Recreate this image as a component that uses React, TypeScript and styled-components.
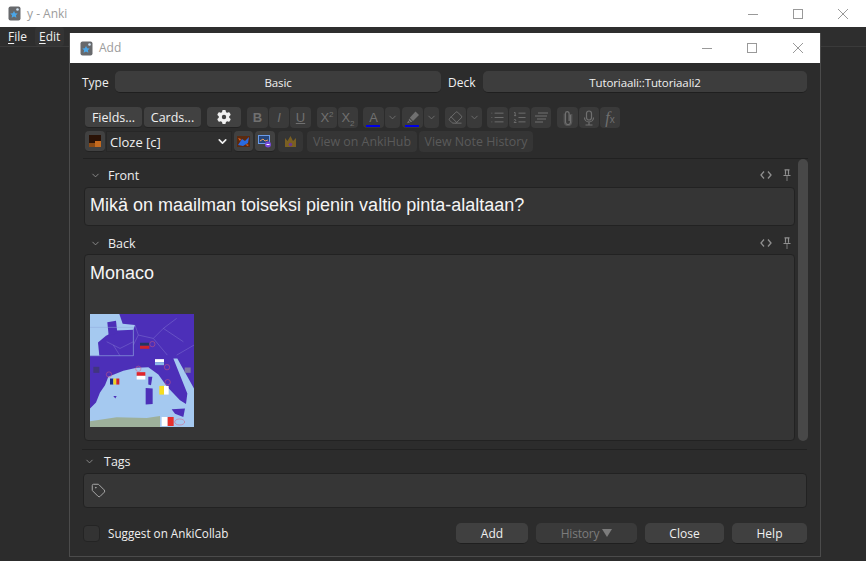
import React from 'react';
import styled, { createGlobalStyle } from 'styled-components';
import { ChevronDown, Tag, Eraser, List, ListOrdered } from 'lucide-react';
import { FaGear } from 'react-icons/fa6';

const Global = createGlobalStyle`
  html, body { margin: 0; padding: 0; background: #2c2c2c; }
  * { box-sizing: border-box; }
`;

const UI = `"Open Sans", "Noto Sans", sans-serif`;

const Screen = styled.div`
  position: relative;
  width: 866px;
  height: 561px;
  overflow: hidden;
  background: #2c2c2c;
  font-family: ${UI};
  font-size: 12px;
  color: #f0f0f0;
`;
const TitleBar = styled.div<{ $h: number; $pr: number }>`
  height: ${p => p.$h}px;
  padding-right: ${p => p.$pr}px;
  background: #fff;
  display: flex;
  align-items: center;
`;
const AppIcon = styled.svg<{ $ml: number }>`
  margin-left: ${p => p.$ml}px;
  width: 13px;
  height: 15px;
  flex: none;
`;
const TitleText = styled.span`
  margin-left: 6px;
  margin-top: -1px;
  flex: 1;
  color: #9c9c9c;
  font-size: 12px;
`;
const WinBtn = styled.div<{ $mr?: number }>`
  width: 45px;
  height: 100%;
  margin-right: ${p => p.$mr ?? 0}px;
  display: flex;
  align-items: center;
  justify-content: center;
`;
const MenuBar = styled.div`
  height: 20px;
  background: #2e2e2e;
  border-bottom: 1px solid #3a3a3a;
  display: flex;
  align-items: center;
  padding-left: 4px;
  gap: 4px;
`;
const MenuItem = styled.span<{ $hover?: boolean }>`
  padding: 0 4px;
  height: 19px;
  line-height: 19px;
  border-radius: 3px;
  background: ${p => (p.$hover ? '#343434' : 'transparent')};
  font-size: 12px;
  u { text-underline-offset: 2px; }
`;
const Dialog = styled.div`
  position: absolute;
  left: 69px;
  top: 33px;
  width: 752px;
  height: 524px;
  background: #2c2c2c;
  border: 1px solid #4b4b4b;
  border-top: 0;
  display: flex;
  flex-direction: column;
`;
const Body = styled.div`
  flex: 1;
  display: flex;
  flex-direction: column;
  padding: 8px 13px 0 12px;
`;
const TypeRow = styled.div`
  display: flex;
  align-items: center;
  height: 22px;
`;
const RowLabel = styled.span<{ $w: number }>`
  width: ${p => p.$w}px;
  flex: none;
  font-size: 12px;
`;
const Combo = styled.div<{ $w: number; $mr?: number }>`
  width: ${p => p.$w}px;
  margin-right: ${p => p.$mr ?? 0}px;
  height: 22px;
  flex: none;
  background: #3d3d3d;
  border-radius: 5px;
  border-bottom: 1px solid #1f1f1f;
  display: flex;
  align-items: center;
  justify-content: center;
  padding-top: 2px;
  font-size: 11.5px;
  letter-spacing: -0.1px;
`;
const ToolRow = styled.div<{ $mt: number }>`
  display: flex;
  align-items: center;
  height: 21px;
  margin-top: ${p => p.$mt}px;
  padding-left: 3px;
`;
const ToolBtn = styled.div<{ $w: number; $ml?: number; $off?: boolean; $size?: number; $faint?: boolean }>`
  width: ${p => p.$w}px;
  margin-left: ${p => p.$ml ?? 0}px;
  height: 21px;
  flex: none;
  position: relative;
  background: ${p => (p.$faint ? '#353535' : p.$off ? '#3a3a3a' : '#414141')};
  border-radius: 4px;
  border-bottom: ${p => (p.$off ? '0' : '1px solid #222')};
  color: ${p => (p.$faint ? '#5a5a5a' : p.$off ? '#707070' : '#f0f0f0')};
  font-size: ${p => p.$size ?? 12.5}px;
  display: flex;
  align-items: center;
  justify-content: center;
  white-space: nowrap;
  svg { flex: none; }
`;
const Letter = styled.span<{ $bold?: boolean; $italic?: boolean; $under?: boolean }>`
  font-family: "Liberation Sans", sans-serif;
  font-size: 13px;
  font-weight: ${p => (p.$bold ? 700 : 400)};
  font-style: ${p => (p.$italic ? 'italic' : 'normal')};
  text-decoration: ${p => (p.$under ? 'underline' : 'none')};
  sup, sub { font-size: 8px; line-height: 0; }
`;
const FxMark = styled.span`
  font-family: "Liberation Serif", serif;
  font-style: italic;
  font-size: 16px;
  small { font-family: "Liberation Sans", sans-serif; font-style: normal; font-size: 10px; }
`;
const ColorBar = styled.i`
  position: absolute;
  left: 3px;
  right: 4px;
  bottom: 1px;
  height: 2px;
  background: #0000e6;
`;
const NoteSelect = styled.div`
  width: 126px;
  height: 21px;
  flex: none;
  margin-left: 1px;
  background: #2f2f2f;
  border: 1px solid #272727;
  display: flex;
  align-items: center;
  justify-content: space-between;
  padding: 0 2px 0 3px;
  font-size: 13px;
`;
const Sep = styled.div`
  height: 1px;
  background: #212121;
`;
const Fields = styled.div`
  display: flex;
  margin-top: 6px;
  margin-right: -1px;
  border-top: 1px solid #212121;
  margin-left: 1px;
  height: 283px;
`;
const FieldCol = styled.div`
  width: 711px;
  flex: none;
  margin-left: 1px;
  display: flex;
  flex-direction: column;
`;
const Scrollbar = styled.div`
  width: 10px;
  flex: none;
  margin-left: 3px;
  background: #484848;
  border-radius: 5px;
`;
const FieldHead = styled.div<{ $pt: number }>`
  height: 28px;
  padding-top: ${p => p.$pt}px;
  display: flex;
  align-items: center;
  color: #eee;
  font-size: 12.5px;
  padding-left: 6px;
`;
const HeadName = styled.span<{ $ml: number }>`
  margin-left: ${p => p.$ml}px;
  flex: 1;
`;
const HeadIcons = styled.div`
  display: flex;
  align-items: center;
  margin-right: 4px;
  gap: 11px;
`;
const Editor = styled.div<{ $h: number; $pt: number }>`
  height: ${p => p.$h}px;
  background: #353535;
  border: 1px solid #222;
  border-radius: 4px;
  padding: ${p => p.$pt}px 5px 0;
  font-family: "Liberation Sans", Arial, sans-serif;
  font-size: 18px;
  line-height: 24px;
  color: #f5f5f5;
`;
const MapFigure = styled.svg`
  display: block;
  width: 104px;
  height: 113px;
  margin-top: 29px;
`;
const BottomSep = styled(Sep)`
  margin-top: 8px;
`;
const TagHead = styled.div`
  height: 23px;
  display: flex;
  align-items: center;
  padding-left: 2px;
  font-size: 12.5px;
  color: #eee;
`;
const TagInput = styled.div`
  margin-left: 1px;
  height: 35px;
  background: #363636;
  border: 1px solid #222;
  border-radius: 4px;
  display: flex;
  align-items: center;
  padding-left: 7px;
  color: #a9a9a9;
`;
const Footer = styled.div`
  display: flex;
  align-items: center;
  margin-top: 15px;
  padding-left: 1px;
  height: 21px;
`;
const CheckBox = styled.div`
  width: 17px;
  height: 17px;
  background: #333;
  border: 1px solid #242424;
  border-radius: 4px;
`;
const CheckLabel = styled.span`
  margin-left: 8px;
  margin-top: -2px;
  font-size: 11.7px;
  flex: 1;
`;
const FootBtn = styled.div<{ $w: number; $off?: boolean }>`
  width: ${p => p.$w}px;
  height: 21px;
  margin-left: 8px;
  background: ${p => (p.$off ? '#3a3a3a' : '#404040')};
  border-radius: 5px;
  border-bottom: 1px solid #1f1f1f;
  color: ${p => (p.$off ? '#7c7c7c' : '#f0f0f0')};
  font-size: 12px;
  letter-spacing: ${p => (p.$off ? '-0.2px' : '0')};
  display: flex;
  align-items: center;
  justify-content: center;
  gap: 3px;
`;
const Arrow = styled.i`
  width: 0;
  height: 0;
  border-left: 5px solid transparent;
  border-right: 5px solid transparent;
  border-top: 8px solid #7c7c7c;
`;

const Logo = ({ ml }: { ml: number }) => (
  <AppIcon $ml={ml} viewBox="0 0 13 15">
    <rect x="0.5" y="0.5" width="12" height="14" rx="2" fill="#67696c" />
    <path d="M6 5l1.200 2.300 2.500.3-1.800 1.700.5 2.500L6 10.600l-2.400 1.200.5-2.500L2.300 7.600l2.500-.3z" fill="#4aa6e8" />
    <circle cx="9.500" cy="3.500" r="1.300" fill="#cfe2f2" />
  </AppIcon>
);
const Min = () => <svg width="10" height="10" viewBox="0 0 10 10"><path d="M0 5.500h10" stroke="#999" /></svg>;
const Max = () => <svg width="10" height="10" viewBox="0 0 10 10"><rect x=".5" y=".5" width="9" height="9" fill="none" stroke="#999" /></svg>;
const Cls = () => <svg width="10" height="10" viewBox="0 0 10 10"><path d="M0 0l10 10M10 0L0 10" stroke="#999" /></svg>;
const Controls = ({ gap = 0 }: { gap?: number }) => (
  <>
    <WinBtn><Min /></WinBtn>
    <WinBtn $mr={gap}><Max /></WinBtn>
    <WinBtn><Cls /></WinBtn>
  </>
);

const Drop = () => <ChevronDown size={11} strokeWidth={2} />;
const Pin = () => (
  <svg width="8" height="12" viewBox="0 0 8 12" fill="none" stroke="#8f8f8f" strokeWidth="1.200">
    <path d="M1.500.8h5M2.500.8v5M5.500.8v5M.5 6.500h7" />
    <path d="M4 7v5" stroke="#6f6f6f" />
  </svg>
);
const CodeMark = () => (
  <svg width="12" height="10" viewBox="0 0 12 10" fill="none" stroke="#8f8f8f" strokeWidth="1.300">
    <path d="M4 1.500L1 5l3 3.500M8 1.500L11 5 8 8.500" />
  </svg>
);
const Head = ({ name, pt }: { name: string; pt: number }) => (
  <FieldHead $pt={pt}>
    <ChevronDown size={11} color="#8f8f8f" />
    <HeadName $ml={7}>{name}</HeadName>
    <HeadIcons>
      <CodeMark />
      <Pin />
    </HeadIcons>
  </FieldHead>
);

const EuropeMap = () => (
  <MapFigure viewBox="30 27 312 338" preserveAspectRatio="none">
    <rect x="30" y="27" width="312" height="338" fill="#a5c9f0" />
    <path d="M30 152H160V75L165 60V27H342V250L292 160H280L322 265L318 296L300 285L262 245L235 208L205 186L170 188L130 197L85 215L75 240L60 262L48 292L30 310Z" fill="#4c2fb8" />
    <path d="M58 152L54 112L78 92L110 76L160 74V152Z" fill="#4c2fb8" />
    <path d="M82 52L108 47L112 84L86 92Z" fill="#4c2fb8" />
    <path d="M118 27H165V60L128 56Z" fill="#4c2fb8" />
    <path d="M275 312L315 310L310 335L285 325Z" fill="#4c2fb8" />
    <path d="M197 248L218 250L218 296L197 298Z" fill="#4c2fb8" />
    <path d="M205 215L217 215L213 240L205 238Z" fill="#4c2fb8" />
    <path d="M100 272L110 272L106 280Z" fill="#4c2fb8" />
    <path d="M30 348L110 336L200 338L240 332V365H30Z" fill="#9db09b" />
    <path d="M30 67H160V152H30" fill="none" stroke="#8fa8dc" strokeWidth="1.500" />
    <path d="M80 110L120 130L160 110M100 120L120 152M165 60L175 90L160 120M175 90L220 100L250 70L290 40M290 150L342 120M220 100L262 150M250 70L310 110" fill="none" stroke="#8d84d6" strokeWidth="1.200" />
    <rect x="180" y="113" width="28" height="9" fill="#23375f" />
    <rect x="180" y="122" width="28" height="9" fill="#d0232b" />
    <rect x="225" y="162" width="27" height="9" fill="#fff" />
    <rect x="225" y="171" width="27" height="9" fill="#8cb8e8" />
    <rect x="90" y="220" width="10" height="18" fill="#1b2a8a" />
    <rect x="100" y="220" width="9" height="18" fill="#f2d21e" />
    <rect x="109" y="220" width="9" height="18" fill="#d0232b" />
    <rect x="170" y="201" width="26" height="11" fill="#e0252b" />
    <rect x="170" y="212" width="26" height="11" fill="#fff" />
    <rect x="238" y="242" width="14" height="26" fill="#f5dd20" />
    <rect x="252" y="242" width="14" height="26" fill="#fff" />
    <rect x="245" y="335" width="18" height="27" fill="#fff" />
    <rect x="263" y="335" width="18" height="27" fill="#e6302c" />
    <g fill="none" stroke="#d65a7a" strokeWidth="1.500">
      <circle cx="217" cy="117" r="8" /><circle cx="261" cy="186" r="8" /><circle cx="175" cy="191" r="8" />
      <circle cx="87" cy="208" r="8" /><circle cx="263" cy="231" r="8" /><ellipse cx="299" cy="350" rx="15" ry="9" />
    </g>
    <rect x="40" y="185" width="18" height="18" fill="#3a3a5a" opacity=".6" />
    <rect x="314" y="187" width="18" height="16" fill="#8a8aa0" opacity=".8" />
  </MapFigure>
);

const LinesIcon = () => (
  <svg width="14" height="13" viewBox="0 0 14 13" fill="none" stroke="currentColor" strokeWidth="1.200">
    <path d="M4 2h10M1 5h12M3 8h9M1 11h8" />
  </svg>
);
const ClipIcon = () => (
  <svg width="10" height="16" viewBox="0 0 10 16" fill="none" stroke="currentColor" strokeWidth="1.200">
    <path d="M7.500 4.500v7.500a2.500 2.500 0 0 1-5 0V3.500a1.800 1.800 0 0 1 3.600 0V11" />
    <path d="M8.800 4v8a3.800 3.800 0 0 1-7.600 0V3.500" strokeWidth=".6" />
  </svg>
);
const MicIcon = () => (
  <svg width="12" height="16" viewBox="0 0 12 16" fill="none" stroke="currentColor" strokeWidth="1.200">
    <rect x="3.500" y="1" width="5" height="9" rx="2.500" />
    <path d="M1.500 7.500a4.500 4.500 0 0 0 9 0M6 12v2.500M2.500 15h7" />
  </svg>
);
const PenIcon = () => (
  <svg width="14" height="13" viewBox="0 0 14 13" fill="currentColor">
    <path d="M9.500 0.500L13 4L7 10L3.800 6.800Z" />
    <path d="M3.200 7.500L6.300 10.600L4.800 11.200L2.600 9.200Z" />
    <path d="M2.300 9.800L4 11.500L1 12.200Z" />
  </svg>
);

export default function App() {
  return (
    <Screen>
      <Global />
      <TitleBar $h={27} $pr={1}>
        <Logo ml={8} />
        <TitleText>y - Anki</TitleText>
        <Controls />
      </TitleBar>
      <MenuBar>
        <MenuItem><u>F</u>ile</MenuItem>
        <MenuItem $hover><u>E</u>dit</MenuItem>
      </MenuBar>
      <Dialog>
        <TitleBar $h={30} $pr={0}>
          <Logo ml={10} />
          <TitleText>Add</TitleText>
          <Controls gap={1} />
        </TitleBar>
        <Body>
          <TypeRow>
            <RowLabel $w={33}>Type</RowLabel>
            <Combo $w={326} $mr={7}>Basic</Combo>
            <RowLabel $w={35}>Deck</RowLabel>
            <Combo $w={324}>Tutoriaali::Tutoriaali2</Combo>
          </TypeRow>
          <ToolRow $mt={14}>
            <ToolBtn $w={57}>Fields...</ToolBtn>
            <ToolBtn $w={57} $ml={2}>Cards...</ToolBtn>
            <ToolBtn $w={34} $ml={6}><FaGear size={14} /></ToolBtn>
            <ToolBtn $off $w={21} $ml={6}><Letter $bold>B</Letter></ToolBtn>
            <ToolBtn $off $w={20} $ml={1}><Letter $italic>I</Letter></ToolBtn>
            <ToolBtn $off $w={21} $ml={1}><Letter $under>U</Letter></ToolBtn>
            <ToolBtn $off $w={20} $ml={6}><Letter>X<sup>2</sup></Letter></ToolBtn>
            <ToolBtn $off $w={20} $ml={1}><Letter>X<sub>2</sub></Letter></ToolBtn>
            <ToolBtn $off $w={21} $ml={5}><Letter>A</Letter><ColorBar /></ToolBtn>
            <ToolBtn $off $w={15} $ml={1}><Drop /></ToolBtn>
            <ToolBtn $off $w={21} $ml={2}><PenIcon /><ColorBar /></ToolBtn>
            <ToolBtn $off $w={15} $ml={1}><Drop /></ToolBtn>
            <ToolBtn $off $w={21} $ml={6}><Eraser size={15} strokeWidth={1.5} /></ToolBtn>
            <ToolBtn $off $w={15} $ml={1}><Drop /></ToolBtn>
            <ToolBtn $off $w={21} $ml={5}><List size={15} strokeWidth={1.5} /></ToolBtn>
            <ToolBtn $off $w={21} $ml={1}><ListOrdered size={15} strokeWidth={1.5} /></ToolBtn>
            <ToolBtn $off $w={20} $ml={1}><LinesIcon /></ToolBtn>
            <ToolBtn $off $w={21} $ml={6}><ClipIcon /></ToolBtn>
            <ToolBtn $off $w={20} $ml={1}><MicIcon /></ToolBtn>
            <ToolBtn $off $w={20} $ml={1}><FxMark>f<small>x</small></FxMark></ToolBtn>
          </ToolRow>
          <ToolRow $mt={3}>
            <ToolBtn $w={20}>
              <svg width="12" height="12" viewBox="0 0 12 12"><rect width="12" height="12" fill="#2a1206" /><path d="M0 8h6V12H0z" fill="#8a4a14" /><path d="M6 6h6v6H6z" fill="#c56a1e" /></svg>
            </ToolBtn>
            <NoteSelect>Cloze [c]<ChevronDown size={13} strokeWidth={3} /></NoteSelect>
            <ToolBtn $w={19} $ml={2}>
              <svg width="13" height="11" viewBox="0 0 13 11"><rect width="13" height="11" fill="#5a2a10" /><path d="M1 9l4-6 3 2 4-4-1 6-5 3z" fill="#2a6ae0" /><path d="M1 2l3 1-1 2zM9 8l3 1-2 1z" fill="#e8621e" /></svg>
            </ToolBtn>
            <ToolBtn $w={20} $ml={2}>
              <svg width="14" height="14" viewBox="0 0 14 14"><rect x=".5" y="1.500" width="11" height="8" fill="#26457a" stroke="#6a9be8" /><path d="M2 7l3-2 2 2 3-1" stroke="#e8a060" fill="none" /><circle cx="10" cy="10.500" r="3" fill="#7a4ad8" /><path d="M8.500 10.500h3" stroke="#fff" /></svg>
            </ToolBtn>
            <ToolBtn $off $faint $w={25} $ml={3}>
              <svg width="13" height="13" viewBox="0 0 13 13"><path d="M1 12V3l2.500 3L6.500 1 9 6l3-3v9z" fill="#7a5f22" /><circle cx="6.500" cy="9.500" r="1.800" fill="#6a3a8a" /></svg>
            </ToolBtn>
            <ToolBtn $off $faint $w={110} $ml={4} $size={12.4}>View on AnkiHub</ToolBtn>
            <ToolBtn $off $faint $w={114} $ml={2} $size={12.4}>View Note History</ToolBtn>
          </ToolRow>
          <Fields>
            <FieldCol>
              <Head name="Front" pt={4} />
              <Editor $h={39} $pt={5}>Mikä on maailman toiseksi pienin valtio pinta-alaltaan?</Editor>
              <Head name="Back" pt={6} />
              <Editor $h={187} $pt={6}>Monaco<EuropeMap /></Editor>
            </FieldCol>
            <Scrollbar />
          </Fields>
          <BottomSep />
          <TagHead>
            <ChevronDown size={11} color="#8f8f8f" />
            <HeadName $ml={9}>Tags</HeadName>
          </TagHead>
          <TagInput><Tag size={15} strokeWidth={1.6} /></TagInput>
          <Footer>
            <CheckBox />
            <CheckLabel>Suggest on AnkiCollab</CheckLabel>
            <FootBtn $w={72}>Add</FootBtn>
            <FootBtn $w={101} $off>History<Arrow /></FootBtn>
            <FootBtn $w={79}>Close</FootBtn>
            <FootBtn $w={75}>Help</FootBtn>
          </Footer>
        </Body>
      </Dialog>
    </Screen>
  );
}
